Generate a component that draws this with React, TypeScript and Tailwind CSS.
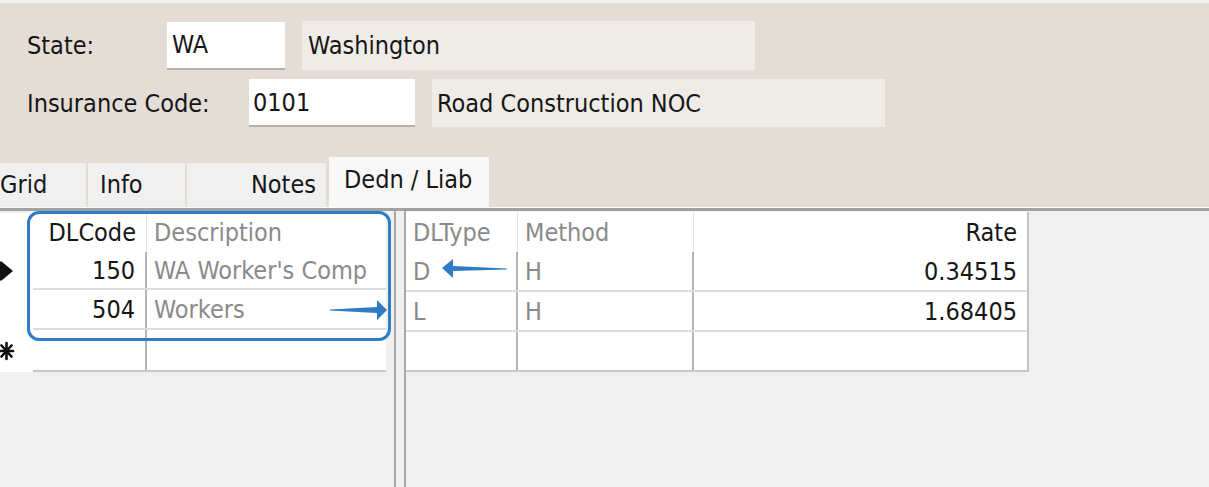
import React from "react"

const font = "font-['DejaVu_Sans_Condensed','DejaVu_Sans',sans-serif] font-stretch-condensed"

type Cell = { text: string; right?: boolean; dim?: boolean; w: string }

function Row({ cells, h, header, last }: { cells: Cell[]; h: string; header?: boolean; last?: boolean }) {
  return (
    <div className={`flex ${h} ${header ? "" : last ? "border-b-2 border-[#c8c8c8]" : "border-b-2 border-[#dcdcdc]"}`}>
      {cells.map((c, i) => (
        <div
          key={i}
          className={`${c.w} flex items-center px-[7px] ${c.right ? "justify-end pr-[10px]" : ""} ${
            i < cells.length - 1 ? (header ? "border-r border-[#e6e6e6]" : "border-r-2 border-[#b4b4b4]") : ""
          } ${c.dim ? "text-[#8a8a8a]" : "text-[#161616]"}`}
        >
          {c.text}
        </div>
      ))}
    </div>
  )
}

function Diamond() {
  return (
    <svg width="14" height="22" viewBox="0 0 14 22">
      <polygon points="0,2 1,1 13,11 1,21 0,20" fill="#111" />
    </svg>
  )
}

function Star() {
  return (
    <svg width="15" height="20" viewBox="0 0 15 20">
      <g stroke="#111" strokeWidth="2.6" strokeLinecap="round">
        <line x1="6.5" y1="2" x2="6.5" y2="18" />
        <line x1="0" y1="10" x2="13" y2="10" />
        <line x1="1.5" y1="4.5" x2="11.5" y2="15.5" />
        <line x1="11.5" y1="4.5" x2="1.5" y2="15.5" />
      </g>
    </svg>
  )
}

export default function App() {
  const left = [
    { h: "h-[39px]", header: true, cells: [{ text: "DLCode", right: true, w: "w-[114px]" }, { text: "Description", dim: true, w: "w-[239px]" }] },
    { h: "h-[38px]", cells: [{ text: "150", right: true, w: "w-[114px]" }, { text: "WA Worker's Comp", dim: true, w: "w-[239px]" }] },
    { h: "h-[40px]", cells: [{ text: "504", right: true, w: "w-[114px]" }, { text: "Workers", dim: true, w: "w-[239px]" }] },
    { h: "h-[42px]", last: true, cells: [{ text: "", w: "w-[114px]" }, { text: "", w: "w-[239px]" }] },
  ]
  const right = [
    { h: "h-[40px]", header: true, cells: [{ text: "DLType", dim: true, w: "w-[112px]" }, { text: "Method", dim: true, w: "w-[176px]" }, { text: "Rate", right: true, w: "w-[333px]" }] },
    { h: "h-[40px]", cells: [{ text: "D", dim: true, w: "w-[112px]" }, { text: "H", dim: true, w: "w-[176px]" }, { text: "0.34515", right: true, w: "w-[333px]" }] },
    { h: "h-[40px]", cells: [{ text: "L", dim: true, w: "w-[112px]" }, { text: "H", dim: true, w: "w-[176px]" }, { text: "1.68405", right: true, w: "w-[333px]" }] },
    { h: "h-[40px]", last: true, cells: [{ text: "", w: "w-[112px]" }, { text: "", w: "w-[176px]" }, { text: "", w: "w-[333px]" }] },
  ]

  return (
    <div className={`relative w-[1209px] h-[487px] overflow-hidden bg-[#f0f0f0] text-[25px] leading-none text-[#161616] ${font}`}>
      <div className="h-[3px] bg-[#f5f3f1]" />

      {/* header fields */}
      <div className="bg-[#e4ddd6] pt-[18px]">
        <div className="flex items-center">
          <div className="w-[167px] pl-[27px]">State:</div>
          <div className="w-[118px] h-[48px] bg-white border-b-2 border-[#b5b0aa] flex items-center pl-[5px]">WA</div>
          <div className="ml-[17px] w-[453px] h-[49px] bg-[#efebe6] flex items-center pl-[6px]">Washington</div>
        </div>
        <div className="flex items-center mt-[9px]">
          <div className="w-[249px] pl-[27px]">Insurance Code:</div>
          <div className="w-[166px] h-[48px] bg-white border-b-2 border-[#b5b0aa] flex items-center pl-[4px]">0101</div>
          <div className="ml-[17px] w-[453px] h-[48px] bg-[#efebe6] flex items-center pl-[5px]">Road Construction NOC</div>
        </div>

        {/* tabs */}
        <div className="flex items-end mt-[30px] h-[50px]">
          <div className="w-[86px] h-[44px] bg-[#f0f0f0] flex items-center pb-[2px]">Grid</div>
          <div className="ml-[2px] w-[97px] h-[44px] bg-[#f0f0f0] flex items-center pl-[12px] pb-[2px]">Info</div>
          <div className="ml-[2px] w-[139px] h-[44px] bg-[#f0f0f0] flex items-center justify-end pr-[10px] pb-[2px]">Notes</div>
          <div className="ml-[3px] w-[160px] h-[50px] bg-[#f8f8f8] flex items-center pl-[15px] pb-[6px]">Dedn / Liab</div>
        </div>
      </div>
      <div className="h-[1px] bg-[#fbfbfb]" />
      <div className="h-[3px] bg-[#a2a2a2]" />

      {/* grids */}
      <div className="flex h-[276px]">
        <div className="w-[393px] pt-[2px]">
          <div className="flex">
            <div className="w-[33px] bg-white flex flex-col">
              <div className="h-[39px]" />
              <div className="h-[38px] flex items-center"><Diamond /></div>
              <div className="h-[40px]" />
              <div className="h-[42px] flex items-center"><Star /></div>
            </div>
            <div className="bg-white">
              {left.map((r, i) => (
                <Row key={i} {...r} />
              ))}
            </div>
          </div>
        </div>
        <div className="w-[12px] h-full ml-[1px] border-l-2 border-r-2 border-[#a9a9a9]" />
        <div className="pt-[1px]">
          <div className="bg-white border-r-2 border-[#c4c4c4]">
            {right.map((r, i) => (
              <Row key={i} {...r} />
            ))}
          </div>
        </div>
      </div>

      {/* callout box */}
      <div className="absolute left-[27px] top-[211px] w-[364px] h-[130px] border-[3px] border-[#2e7cc6] rounded-[12px]" />

      {/* arrows */}
      <svg className="absolute left-[328px] top-[298px]" width="62" height="24" viewBox="0 0 62 24">
        <polygon points="2,11.5 49,9 49,2 59,12 49,22 49,15 2,12.5" fill="#2e7cc6" />
      </svg>
      <svg className="absolute left-[439px] top-[257px]" width="72" height="24" viewBox="0 0 72 24">
        <polygon points="68,11.5 14,9 14,2 3,11 14,21 14,14 68,12.5" fill="#2e7cc6" />
      </svg>
    </div>
  )
}
